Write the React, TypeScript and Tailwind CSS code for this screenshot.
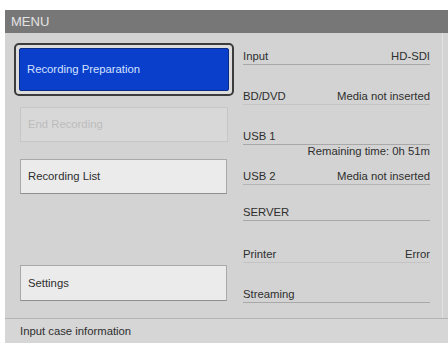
const rows = [
  { label: "Input", value: "HD-SDI", mt: "mt-[17px]", line: "border-[#a8a8a8]" },
  { label: "BD/DVD", value: "Media not inserted", mt: "mt-[25px]", line: "border-[#c4c4c4]" },
  { label: "USB 1", value: "", mt: "mt-[25px]", line: "border-[#a8a8a8]" },
];

const rows2 = [
  { label: "USB 2", value: "Media not inserted", mt: "mt-[12px]", line: "border-[#b4b4b4]" },
  { label: "SERVER", value: "", mt: "mt-[21px]", line: "border-[#a8a8a8]" },
  { label: "Printer", value: "Error", mt: "mt-[27px]", line: "border-[#c4c4c4]" },
  { label: "Streaming", value: "", mt: "mt-[25px]", line: "border-[#a8a8a8]" },
];

function Row({ label, value, mt, line }: { label: string; value: string; mt: string; line: string }) {
  return (
    <div className={`${mt} flex justify-between border-b ${line} pb-[1px] leading-[13px]`}>
      <span>{label}</span>
      <span>{value}</span>
    </div>
  );
}

export default function App() {
  return (
    <div className="w-[448px] h-[343px] bg-white pt-[10px] pl-[5px] overflow-hidden font-['Liberation_Sans',Arial,sans-serif] text-[11.3px] text-[#2e2e2e]">
      <div className="h-[333px] flex flex-col bg-[#d3d3d3]">
        <div className="h-[23px] bg-[#777777] px-[6px] leading-[23px] text-[13px] text-[#e4e4e4]">
          MENU
        </div>
        <div className="flex-1 flex border-r border-[#e2e2e2] mr-[5px]">
          {/* left buttons */}
          <div className="w-[231px] flex flex-col pl-[9px]">
            <div className="mt-[10px] w-[220px] h-[53px] rounded-[5px] border-2 border-[#3c3c3c] bg-[#dcdcdc] p-[3px]">
              <div className="h-full rounded-[2px] border border-[#0a2a86] bg-[#0a3fcc] flex items-center pl-[7px] text-[#d4e2ff]">
                Recording Preparation
              </div>
            </div>
            <div className="mt-[11px] ml-[6px] w-[208px] h-[35px] border border-[#c6c6c6] bg-[#d8d8d8] flex items-center pl-[7px] text-[#bcbcbc]">
              End Recording
            </div>
            <div className="mt-[17px] ml-[6px] w-[207px] h-[35px] border border-[#a9a9a9] border-b-[#8f8f8f] bg-[#ebebeb] flex items-center pl-[7px]">
              Recording List
            </div>
            <div className="mt-[71px] ml-[6px] w-[207px] h-[36px] border border-[#a9a9a9] border-b-[#8f8f8f] bg-[#ebebeb] flex items-center pl-[7px]">
              Settings
            </div>
          </div>
          {/* right status */}
          <div className="w-[187px] ml-[7px] flex flex-col">
            {rows.map((r) => (
              <Row key={r.label} {...r} />
            ))}
            <div className="leading-[13px] text-right">Remaining time: 0h 51m</div>
            {rows2.map((r) => (
              <Row key={r.label} {...r} />
            ))}
          </div>
        </div>
        <div className="h-[25px] border-t border-[#b4b4b4] pl-[15px] leading-[24px] bg-[#d6d6d6]">
          Input case information
        </div>
      </div>
    </div>
  );
}
